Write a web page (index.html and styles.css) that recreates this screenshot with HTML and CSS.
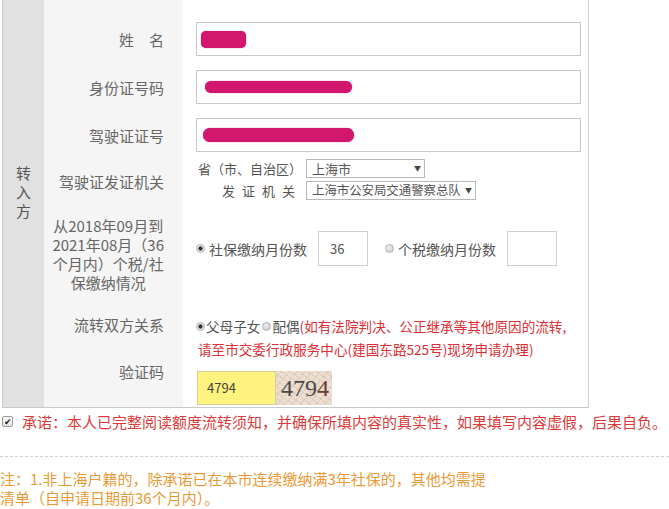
FILE: index.html
```html
<!DOCTYPE html>
<html lang="zh-CN">
<head>
<meta charset="utf-8">
<title>转入方</title>
<link rel="stylesheet" href="styles.css">
</head>
<body>
<div class="form">
  <div class="side"><span class="side-char">转</span><span class="side-char">入</span><span class="side-char">方</span></div>
  <div class="rows">
    <div class="row row-input">
      <div class="lab">姓　名</div>
      <div class="val"><div class="field"><span class="mask mask-1"></span></div></div>
    </div>
    <div class="row row-input">
      <div class="lab">身份证号码</div>
      <div class="val"><div class="field"><span class="mask mask-2"></span></div></div>
    </div>
    <div class="row row-input">
      <div class="lab">驾驶证证号</div>
      <div class="val"><div class="field"><span class="mask mask-3"></span></div></div>
    </div>
    <div class="row row-issuer">
      <div class="lab">驾驶证发证机关</div>
      <div class="val">
        <div class="issuer-grid">
          <span class="issuer-label">省（市、自治区）</span>
          <div class="select sel-1"><span>上海市</span><span class="arrow">▼</span></div>
          <span class="issuer-label spaced">发证机关</span>
          <div class="select sel-2"><span>上海市公安局交通警察总队</span><span class="arrow">▼</span></div>
        </div>
      </div>
    </div>
    <div class="row row-social">
      <div class="lab"><span class="lab-block">从2018年09月到<br>2021年08月（36<br>个月内）个税/社<br>保缴纳情况</span></div>
      <div class="val">
        <span class="radio checked"></span>
        <span class="opt-text">社保缴纳月份数</span>
        <div class="box">36</div>
        <span class="radio radio-2"></span>
        <span class="opt-text">个税缴纳月份数</span>
        <div class="box"></div>
      </div>
    </div>
    <div class="row row-relation">
      <div class="lab">流转双方关系</div>
      <div class="val">
        <div class="rel-line"><span class="radio checked"></span><span class="rel-opt">父母子女</span><span class="radio radio-3"></span><span class="rel-opt">配偶</span><span class="red">(如有法院判决、公正继承等其他原因的流转,</span></div>
        <div class="rel-line2 red">请至市交委行政服务中心(建国东路525号)现场申请办理)</div>
      </div>
    </div>
    <div class="row row-captcha">
      <div class="lab">验证码</div>
      <div class="val">
        <div class="captcha-input">4794</div>
        <div class="captcha-img"><span>479</span><span class="last">4</span></div>
      </div>
    </div>
  </div>
</div>
<div class="promise">
  <span class="checkbox">✔</span>
  <span class="promise-text">承诺：本人已完整阅读额度流转须知，并确保所填内容的真实性，如果填写内容虚假，后果自负。</span>
</div>
<div class="note">注：1.非上海户籍的，除承诺已在本市连续缴纳满3年社保的，其他均需提<br>清单（自申请日期前36个月内）。</div>
</body>
</html>
```

FILE: styles.css
```css
html, body {
  margin: 0;
  padding: 0;
  background: #fff;
}
body {
  width: 669px;
  height: 509px;
  overflow: hidden;
  font-family: "Noto Sans CJK SC", "Noto Sans", sans-serif;
  color: #666;
}
.form {
  display: flex;
  width: 587px;
  margin-left: 2px;
  box-sizing: border-box;
  border-left: 1px solid #c8c8c8;
  border-right: 1px solid #d0d0d0;
  border-bottom: 1px solid #c8c8c8;
}
.side {
  width: 41px;
  flex: none;
  background: #e1e1e1;
  display: flex;
  flex-direction: column;
  align-items: center;
  justify-content: center;
  padding-bottom: 25px;
}
.side-char {
  display: block;
  height: 19px;
  font-size: 15px;
  line-height: 19px;
  color: #555;
}
.rows {
  flex: 1;
  display: flex;
  flex-direction: column;
  padding-top: 15px;
  background: linear-gradient(to right, #f5f5f5 0, #f5f5f5 139px, #fff 139px);
}
.row {
  display: flex;
}
.lab {
  width: 139px;
  flex: none;
  box-sizing: border-box;
  padding-right: 19px;
  display: flex;
  align-items: center;
  justify-content: flex-end;
  font-size: 15px;
  color: #666;
  white-space: nowrap;
}
.val {
  flex: 1;
  box-sizing: border-box;
}
.row-input .val {
  padding: 7px 7px 7px 13px;
}
.field {
  width: 385px;
  height: 34px;
  box-sizing: border-box;
  border: 1px solid #c9c9c9;
  background: #fff;
  display: flex;
  align-items: center;
}
.mask {
  display: block;
  background: #d4176e;
  box-shadow: 0 0 1px #b0105a;
}
.mask-1 { width: 45px; height: 17px; border-radius: 5px; margin-left: 4px; }
.mask-2 { width: 147px; height: 12px; border-radius: 6px; margin-left: 8px; }
.mask-3 { width: 151px; height: 14px; border-radius: 7px; margin-left: 6px; }

.row-issuer .val {
  padding: 0 0 4px 15px;
}
.issuer-grid {
  display: grid;
  grid-template-columns: auto auto;
  justify-content: start;
  column-gap: 4px;
  row-gap: 3px;
  align-items: center;
  font-size: 13px;
  color: #555;
}
.issuer-label {
  justify-self: end;
  line-height: 19px;
  white-space: nowrap;
}
.spaced {
  letter-spacing: 7px;
}
.select {
  height: 19px;
  box-sizing: border-box;
  border: 1px solid #b8b8b8;
  background: #fff;
  display: flex;
  align-items: center;
  justify-content: space-between;
  padding: 0 3px 0 5px;
  font-size: 13px;
  color: #555;
  line-height: 17px;
  white-space: nowrap;
  overflow: hidden;
}
.sel-1 { width: 119px; }
.sel-2 { width: 170px; font-size: 12.4px; }
.arrow {
  font-size: 7px;
  color: #444;
  flex: none;
}
.row-social .val {
  padding: 27px 0 38px 13px;
  display: flex;
  align-items: center;
}
.lab-block {
  text-align: center;
  line-height: 19px;
  font-size: 15px;
}
.radio {
  width: 9px;
  height: 9px;
  flex: none;
  box-sizing: border-box;
  border-radius: 50%;
  border: 1px solid #b5b5b5;
  background: radial-gradient(circle at 40% 35%, #f0f0f0 0, #cfcfcf 70%);
  display: inline-block;
}
.radio.checked {
  background: radial-gradient(circle, #333 0, #333 1.8px, #e8e8e8 2.4px, #cfcfcf 100%);
}
.opt-text {
  font-size: 14px;
  color: #555;
  margin-left: 4px;
}
.box {
  width: 50px;
  height: 35px;
  box-sizing: border-box;
  border: 1px solid #cfcfcf;
  margin-left: 11px;
  font-size: 13px;
  color: #555;
  line-height: 33px;
  padding-left: 11px;
}
.radio-2 {
  margin-left: 17px;
}
.row-relation .lab {
  align-items: flex-start;
  padding-top: 9px;
  line-height: 24px;
}
.row-relation .val {
  padding: 10px 0 0 13px;
  font-size: 13.6px;
}
.rel-line {
  display: flex;
  align-items: center;
  height: 24px;
  white-space: nowrap;
  color: #555;
}
.rel-opt {
  margin-left: 1px;
}
.radio-3 {
  margin-left: 2px;
}
.red {
  color: #dd2f35;
}
.rel-line2 {
  line-height: 22px;
  padding-left: 2px;
  white-space: nowrap;
}
.row-captcha .lab {
  align-items: flex-start;
  padding-top: 2px;
  line-height: 20px;
}
.row-captcha .val {
  padding: 11px 0 2px 14px;
  display: flex;
}
.captcha-input {
  width: 79px;
  height: 34px;
  box-sizing: border-box;
  border: 1px solid #d6cf9a;
  background: #fff27e;
  font-size: 13px;
  color: #444;
  line-height: 32px;
  padding-left: 9px;
}
.captcha-img {
  width: 56px;
  height: 34px;
  box-sizing: border-box;
  background:
    repeating-linear-gradient(35deg, rgba(200,150,120,0.25) 0 1px, transparent 1px 5px),
    repeating-linear-gradient(-50deg, rgba(170,140,120,0.2) 0 1px, transparent 1px 6px),
    #ecdfd2;
  font-family: "Liberation Serif", "DejaVu Serif", serif;
  font-size: 24px;
  line-height: 34px;
  color: #4a4a4a;
  padding-left: 5px;
  white-space: nowrap;
  overflow: hidden;
}
.captcha-img .last {
  color: #6d3b33;
}
.promise {
  display: flex;
  align-items: center;
  height: 26px;
  padding-left: 2px;
  white-space: nowrap;
}
.checkbox {
  width: 11px;
  height: 11px;
  box-sizing: border-box;
  flex: none;
  border: 1px solid #9a9a9a;
  border-radius: 2px;
  background: linear-gradient(#fff, #e6e6e6);
  font-size: 9px;
  line-height: 9px;
  color: #222;
  text-align: center;
}
.promise-text {
  margin-left: 9px;
  font-size: 15px;
  color: #dd3a3a;
}
.note {
  margin-top: 22px;
  border-top: 1px dashed #cfcfcf;
  padding-top: 12px;
  font-size: 15px;
  line-height: 19px;
  color: #ea9a35;
  white-space: nowrap;
}
```
